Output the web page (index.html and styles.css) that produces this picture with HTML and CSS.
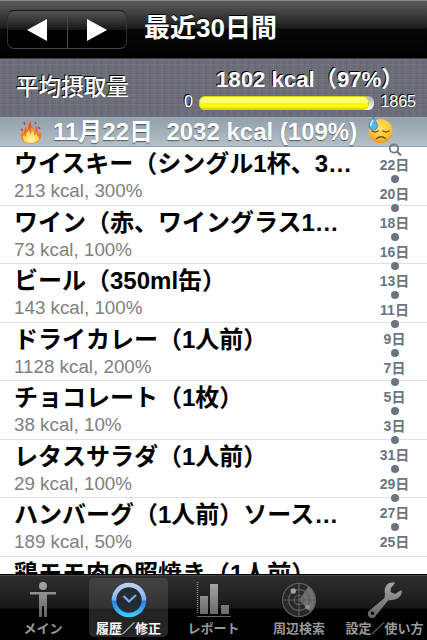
FILE: index.html
```html
<!DOCTYPE html>
<html lang="ja">
  <head>
    <meta charset="UTF-8" />
    <meta name="viewport" content="width=device-width, initial-scale=1.0" />
    <title>最近30日間</title>
    <link rel="stylesheet" href="styles.css">
  </head>
  <body>
    <header class="navbar">
      <div class="arrows">
        <button type="button" aria-label="前へ"><svg width="20" height="22" viewBox="0 0 20 22"><path d="M20 0V22L0 11Z" fill="#fff"/></svg></button>
        <button type="button" aria-label="次へ"><svg width="20" height="22" viewBox="0 0 20 22"><path d="M0 0V22L20 11Z" fill="#fff"/></svg></button>
      </div>
      <h1>最近30日間</h1>
    </header>

    <section class="summary">
      <h2>平均摂取量</h2>
      <div class="intake">
        <div class="total">1802 kcal（97%）</div>
        <div class="scale">
          <span>0</span>
          <div class="meter"><div class="fill" style="width: 97%"></div></div>
          <span>1865</span>
        </div>
      </div>
    </section>

    <div class="day">
      <svg class="fire" width="22" height="24" viewBox="0 0 22 24">
        <defs>
          <linearGradient id="flame" x1="0" y1="0" x2="0" y2="1">
            <stop offset="0" stop-color="#d93c16"/>
            <stop offset=".5" stop-color="#f07a1c"/>
            <stop offset="1" stop-color="#f58a13"/>
          </linearGradient>
          <radialGradient id="glow" cx=".5" cy=".8" r=".65">
            <stop offset="0" stop-color="#fffbb0"/>
            <stop offset="1" stop-color="#ffc52a"/>
          </radialGradient>
        </defs>
        <path d="M4 22C1 20 0 16 2 12Q3 14 4 14Q3 10 6 7Q6 10 8 10Q7 5 11 1Q10 6 13 8Q14 10 14 12Q16 10 15 6Q19 9 18 14Q20 13 20 11Q23 18 18 22Q11 25 4 22Z" fill="url(#flame)"/>
        <path d="M5 22Q1 18 4 15L6 17Q6 12 9 10L11 15Q12 10 11 7Q15 12 14 16L17 13Q16 16 18 16Q21 20 16 22Q11 24 5 22Z" fill="url(#glow)"/>
        <path d="M1 9l2 2M4 2l1 3M18 7l2 2M15 2l1 2" stroke="#d33d29" stroke-width="1.5"/>
      </svg>
      <span class="day-text">11月22日&nbsp; 2032 kcal (109%)</span>
      <svg class="face" width="26" height="27" viewBox="0 0 26 27">
        <defs>
          <radialGradient id="skin" cx=".5" cy=".35" r=".65">
            <stop offset="0" stop-color="#ffe36a"/>
            <stop offset=".7" stop-color="#fcc32f"/>
            <stop offset="1" stop-color="#ee9420"/>
          </radialGradient>
        </defs>
        <circle cx="13.5" cy="14" r="12" fill="url(#skin)"/>
        <path d="M5 14q3 2 6 0M16 14q3 2 6 0M9.500 21.500q4.500-3.500 9 0" fill="none" stroke="#77451b" stroke-width="1.500" stroke-linecap="round"/>
        <path d="M6.500 0C4 4 2 6 2 9a4.200 4.200 0 0 0 8.400 0C10.400 6 8 4 6.500 0Z" fill="#59b5ec" stroke="#2388cf" stroke-width=".8"/>
        <path d="M6 3Q3.500 6 3.800 9" fill="none" stroke="#d8f3ff" stroke-width="1.500"/>
      </svg>
    </div>

    <main>
      <ul class="foods">
        <li><b>ウイスキー（シングル1杯、3…</b><small>213 kcal, 300%</small></li>
        <li><b>ワイン（赤、ワイングラス1…</b><small>73 kcal, 100%</small></li>
        <li><b>ビール（350ml缶）</b><small>143 kcal, 100%</small></li>
        <li><b>ドライカレー（1人前）</b><small>1128 kcal, 200%</small></li>
        <li><b>チョコレート（1枚）</b><small>38 kcal, 10%</small></li>
        <li><b>レタスサラダ（1人前）</b><small>29 kcal, 100%</small></li>
        <li><b>ハンバーグ（1人前）ソース…</b><small>189 kcal, 50%</small></li>
        <li><b>鶏モモ肉の照焼き（1人前）</b></li>
      </ul>
      <nav class="index">
        <svg width="14" height="14" viewBox="0 0 14 14"><circle cx="6" cy="5.500" r="4.200" fill="none" stroke="#6b7580" stroke-width="1.800"/><path d="M9 8.500l4 4" stroke="#6b7580" stroke-width="2.200"/></svg>
        <span>22日</span><i></i>
        <span>20日</span><i></i>
        <span>18日</span><i></i>
        <span>16日</span><i></i>
        <span>13日</span><i></i>
        <span>11日</span><i></i>
        <span>9日</span><i></i>
        <span>7日</span><i></i>
        <span>5日</span><i></i>
        <span>3日</span><i></i>
        <span>31日</span><i></i>
        <span>29日</span><i></i>
        <span>27日</span><i></i>
        <span>25日</span>
      </nav>
    </main>

    <footer class="tabbar">
      <svg class="defs" width="0" height="0">
        <defs>
          <linearGradient id="gray" x1="0" y1="0" x2="0" y2="1">
            <stop offset="0" stop-color="#a5a5a5"/>
            <stop offset="1" stop-color="#636363"/>
          </linearGradient>
          <linearGradient id="blue" x1="0" y1="0" x2="0" y2="1">
            <stop offset="0" stop-color="#bdcff5"/>
            <stop offset=".48" stop-color="#84adec"/>
            <stop offset=".55" stop-color="#2583e8"/>
            <stop offset="1" stop-color="#3bc8fb"/>
          </linearGradient>
        </defs>
      </svg>
      <div class="tab">
        <svg width="36" height="36" viewBox="0 0 36 36" fill="url(#gray)"><path d="M18 0a4 4 0 0 1 0 8a4 4 0 0 1 0-8ZM5 10H31V12.500H22V35H19V24H17V35H14V12.500H5Z"/></svg>
        <span>メイン</span>
      </div>
      <div class="tab active">
        <svg width="36" height="36" viewBox="0 0 36 36"><circle cx="18" cy="18" r="13.500" fill="#242b34"/><circle cx="18" cy="18" r="15" fill="none" stroke="url(#blue)" stroke-width="4.500"/><path d="M12.500 14l5.500 5.500l7-6.500" fill="none" stroke="#7caee8" stroke-width="2.200"/></svg>
        <span>履歴／修正</span>
      </div>
      <div class="tab">
        <svg width="36" height="36" viewBox="0 0 36 36"><path d="M1.500 0V32" stroke="#858585" stroke-width="1.500" stroke-dasharray="1 1"/><path d="M4 14H12V32H4ZM14 2H22V32H14ZM25 23H33V32H25ZM1 34H35V35H1Z" fill="url(#gray)"/></svg>
        <span>レポート</span>
      </div>
      <div class="tab">
        <svg width="38" height="38" viewBox="0 0 38 38"><circle cx="19" cy="19" r="17.500" fill="#292929"/><path d="M19 19L29 4.500A17.500 17.500 0 0 1 31 31.500Z" fill="#707070"/><g fill="none" stroke="#5c5c5c" stroke-width="1.300"><circle cx="19" cy="19" r="17.500"/><circle cx="19" cy="19" r="11"/><circle cx="19" cy="19" r="5"/><path d="M1 19H37M19 1V37"/></g><circle cx="13" cy="9.500" r="2.800" fill="#a2a2a2"/><circle cx="28" cy="26.500" r="2.500" fill="#929292"/></svg>
        <span>周辺検索</span>
      </div>
      <div class="tab">
        <svg width="36" height="36" viewBox="0 0 36 36"><path d="M28 1C22-1 16 4 18 12L17.500 16L3 28A4.300 4.300 0 1 0 9 33.500L21 18.500L25 18C31 18 36 13 34.500 8L28 12L23.500 10L24 6ZM5.500 29.500a1.800 1.800 0 1 1 0 3.600a1.800 1.800 0 0 1 0-3.600Z" fill="url(#gray)" fill-rule="evenodd"/></svg>
        <span>設定／使い方</span>
      </div>
    </footer>
  </body>
</html>
```
FILE: styles.css
```css
* {
    box-sizing: border-box;
}

body {
    margin: 0;
    height: 640px;
    display: flex;
    flex-direction: column;
    overflow: hidden;
    background: #fff;
    font-family: "Liberation Sans", "Noto Sans CJK JP", sans-serif;
}

h1, h2, ul {
    margin: 0;
    padding: 0;
}

.navbar {
    flex: none;
    height: 58px;
    display: flex;
    align-items: flex-start;
    padding: 10px 7px 0;
    border-top: 1px solid #888;
    background: linear-gradient(#5c5c5c, #1d1d1d 27px, #080808 28px, #000);
}

.arrows {
    display: flex;
    width: 120px;
    height: 39px;
    margin-top: -1px;
    border: 1px solid #303030;
    border-top-color: #171717;
    border-bottom-color: #444;
    border-radius: 7px;
    background: linear-gradient(#555, #181818 50%, #000 52%);
    overflow: hidden;
}

.arrows button {
    flex: 1;
    display: flex;
    align-items: center;
    justify-content: center;
    padding: 0;
    border: 0;
    background: none;
}

.arrows button + button {
    border-left: 1px solid #484848;
}

.navbar h1 {
    margin-left: 17px;
    font-size: 26px;
    line-height: 34px;
    color: #fff;
    text-shadow: 0 -1px 0 #000;
}

/* 平均摂取量 */
.summary {
    flex: none;
    height: 59px;
    display: flex;
    justify-content: space-between;
    padding: 0 9px 0 16px;
    border-top: 1px solid #393939;
    color: #fff;
    text-shadow: -1px -1px 0 #000;
    background:
        repeating-linear-gradient(90deg, rgba(255,255,255,.04) 0 1px, transparent 1px 3px, rgba(0,0,0,.05) 3px 4px, transparent 4px 7px),
        repeating-linear-gradient(rgba(255,255,255,.04) 0 1px, transparent 1px 4px, rgba(0,0,0,.04) 4px 5px),
        #6b6e79;
}

.summary h2 {
    font-size: 22.6px;
    font-weight: 500;
    line-height: 32px;
    margin-top: 13px;
}

.intake {
    width: 234px;
}

.total {
    padding-left: 32px;
    margin-top: 6px;
    font-size: 22.2px;
    font-weight: bold;
    line-height: 30px;
    white-space: nowrap;
}

.scale {
    display: flex;
    align-items: center;
    gap: 6px;
    height: 16px;
    margin-top: -1px;
    margin-right: 2px;
    font-size: 16px;
    line-height: 16px;
}

.meter {
    flex: 1;
    height: 14px;
    margin-top: 2px;
    border-radius: 6px;
    background: linear-gradient(#aaa, #fff);
    overflow: hidden;
}

.fill {
    height: 100%;
    border: 1px solid #d5d500;
    border-radius: 6px;
    background: linear-gradient(#ffff75 45%, #f7f700 50%, #ff0 80%, #d0d000);
}

.day {
    flex: none;
    height: 30px;
    display: flex;
    align-items: center;
    padding-left: 20px;
    border-top: 1px solid #a2adb6;
    border-bottom: 1px solid #949fa8;
    background: linear-gradient(#91a0ab, #b6c0c8);
    color: #fff;
    font-size: 24px;
    font-weight: bold;
    line-height: 28px;
    white-space: nowrap;
    text-shadow: 0 1px 1px rgba(0,0,0,.5);
}

.day-text {
    width: 305px;
    margin: 0 9px 0 11px;
}

.face {
    margin-top: -3px;
}

/* 食事リスト */
main {
    flex: 1;
    min-height: 0;
    display: flex;
    position: relative;
}

.foods {
    flex: 1;
    list-style: none;
}

.foods li {
    height: 58.5px;
    padding: 1px 0 0 14px;
    border-bottom: 1px solid #e0e0e0;
    white-space: nowrap;
}

.foods b {
    display: block;
    font-size: 24px;
    line-height: 32px;
    color: #000;
}

.foods small {
    display: block;
    font-size: 18.8px;
    line-height: 22px;
    color: #808080;
}

.index {
    position: absolute;
    top: -4px;
    right: 12px;
    width: 41px;
    display: grid;
    grid-auto-rows: 14.5px;
    place-items: center;
    font-size: 14px;
    font-weight: bold;
    line-height: 14.5px;
    color: #6b7580;
}

.index i {
    width: 8px;
    height: 8px;
    border-radius: 50%;
    background: #6b7580;
}

.tabbar {
    flex: none;
    height: 66px;
    display: grid;
    grid-template-columns: 86px 85px 85px 86px 85px;
    padding-top: 3px;
    position: relative;
    border-top: 1px solid #000;
    box-shadow: inset 0 1px #474747;
    background: linear-gradient(#303030, #171717 33px, #000 34px);
}

.defs {
    position: absolute;
}

.tab {
    display: flex;
    flex-direction: column;
    align-items: center;
    height: 59px;
    margin: 0 3px;
    padding-top: 4px;
    border-radius: 5px;
    color: #999;
    font-size: 13px;
    font-weight: bold;
    white-space: nowrap;
}

.tab svg {
    height: 36px;
    flex: none;
}

.tab span {
    line-height: 18px;
    margin-top: 2px;
}

.active {
    background: linear-gradient(#434343, #323232 30px, #222 31px, #272727);
    color: #fff;
}
```
